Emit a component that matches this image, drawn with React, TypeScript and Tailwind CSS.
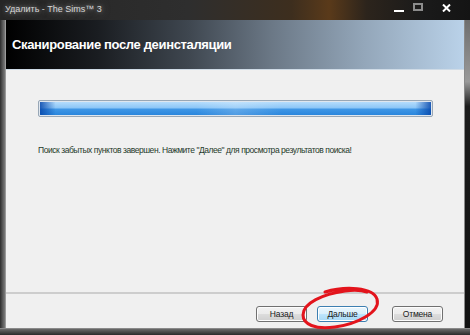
import React from 'react';

const font = { fontFamily: '"Liberation Sans", Arial, sans-serif' };

const WinButton: React.FC<{ label: string; primary?: boolean; className?: string }> = ({ label, primary, className }) => (
  <button
    className={
      (primary
        ? 'w-[51px] h-[16px] rounded-[3px] border border-[#3c7fb1] bg-[linear-gradient(#eaf6fd,#d9f0fc_50%,#bee6fd_50%,#a7d9f5)] text-[8.5px] tracking-[-0.2px] text-[#1a1a1a] leading-none shadow-[inset_0_0_0_1px_#fff] '
        : 'w-[51px] h-[16px] rounded-[3px] border border-[#707070] bg-[linear-gradient(#f2f2f2,#ebebeb_50%,#dddddd_50%,#cfcfcf)] text-[8.5px] tracking-[-0.2px] text-[#1a1a1a] leading-none shadow-[inset_0_0_0_1px_#fcfcfc] ') +
      (className ?? '')
    }
    style={font}
  >
    {label}
  </button>
);

export default function App() {
  return (
    <div className="relative w-[470px] h-[335px] overflow-hidden bg-[#1c1c1c] flex flex-col" style={font}>
      {/* title bar */}
      <div className="h-[20px] shrink-0 flex items-center bg-[linear-gradient(to_right,#262626_0%,#2e2e2e_40%,#3d2e1e_62%,#5a3a1a_70%,#2c241c_78%,#1a1a1a_90%,#141414_100%)]">
        <span className="ml-[5px] text-[9px] text-[#d6d6d6] [text-shadow:0_0_4px_#8a8a8a,0_0_8px_#6a6a6a]">
          Удалить - The Sims™ 3
        </span>
        <div className="ml-auto flex items-start h-full pt-[3px]">
          <div className="w-[10px] h-[2px] bg-white mt-[7px] mr-[9px]" />
          <div className="w-[10px] h-[8px] border-[2px] border-[#8c8c8c] mr-[19px]" />
          <svg width="9" height="8" viewBox="0 0 9 8" className="mr-[19px] mt-[1px]">
            <path d="M1 0.5 L8 7.5 M8 0.5 L1 7.5" stroke="#fff" strokeWidth="2" />
          </svg>
        </div>
      </div>

      {/* frame + client */}
      <div className="flex flex-1">
        <div className="w-[5px] bg-[linear-gradient(to_right,#2c2c2c,#5e5e5e_60%,#7a7a7a)]" />
        <div className="w-[459px] flex flex-col bg-[#f0f0f0] border-l border-[#9a9a9a]">
          {/* header */}
          <div className="h-[50px] shrink-0 flex items-center pl-[6px] border-b border-[#cfdbe6] bg-[linear-gradient(to_right,#000000_0%,#1a1d21_20%,#3f4750_40%,#6b7886_58%,#93a6b9_78%,#bad2e9_100%)]">
            <span className="text-[13px] font-bold tracking-[-0.35px] text-white">Сканирование после деинсталяции</span>
          </div>

          {/* content */}
          <div className="flex-1 flex flex-col pl-[32px]">
            <div className="mt-[30px] w-[395px] h-[17px] rounded-[2px] border border-[#98a7b6] bg-[#dfe6ee] p-[1px]">
              <div className="relative w-full h-full rounded-[1px] bg-[linear-gradient(#b4dcfc,#8cc6f7_45%,#3e96e6_55%,#2a86dc)]">
                <div className="absolute inset-0 bg-[linear-gradient(to_right,rgba(6,70,170,0.85)_0%,rgba(6,70,170,0)_4%,rgba(255,255,255,0)_40%,rgba(255,255,255,0.18)_50%,rgba(255,255,255,0)_62%,rgba(6,70,170,0)_96%,rgba(6,70,170,0.85)_100%)]" />
              </div>
            </div>
            <p className="mt-[27px] text-[8.5px] tracking-[-0.45px] text-[#1f3a2a]">
              Поиск забытых пунктов завершен. Нажмите "Далее" для просмотра результатов поиска!
            </p>
          </div>

          {/* footer */}
          <div className="h-[36px] shrink-0 border-t-2 border-[#cdcdcd] flex items-start pt-[12px] pl-[250px]">
            <WinButton label="Назад" />
            <WinButton label="Дальше" primary className="ml-[10px]" />
            <WinButton label="Отмена" className="ml-[24px]" />
          </div>
        </div>
        <div className="w-[6px] bg-[linear-gradient(#6e6e6e,#9a9a9a_20%,#1c1c1c_28%,#111_100%)] border-l border-[#8a8a8a]" />
      </div>
      <div className="h-[7px] shrink-0 border-t border-[#8a8a8a] bg-[linear-gradient(#6a6a6a,#2a2a2a)]" />

      {/* red hand-drawn circle */}
      <svg className="absolute left-[295px] top-[284px]" width="95" height="50" viewBox="0 0 95 50">
        <path
          d="M30 8 C50 2 78 3 82 15 C86 28 62 40 40 43 C20 46 8 40 8 31 C8 19 28 10 50 7 C58 6 66 6 72 8"
          fill="none"
          stroke="#e3141c"
          strokeWidth="3"
          strokeLinecap="round"
        />
      </svg>
    </div>
  );
}
